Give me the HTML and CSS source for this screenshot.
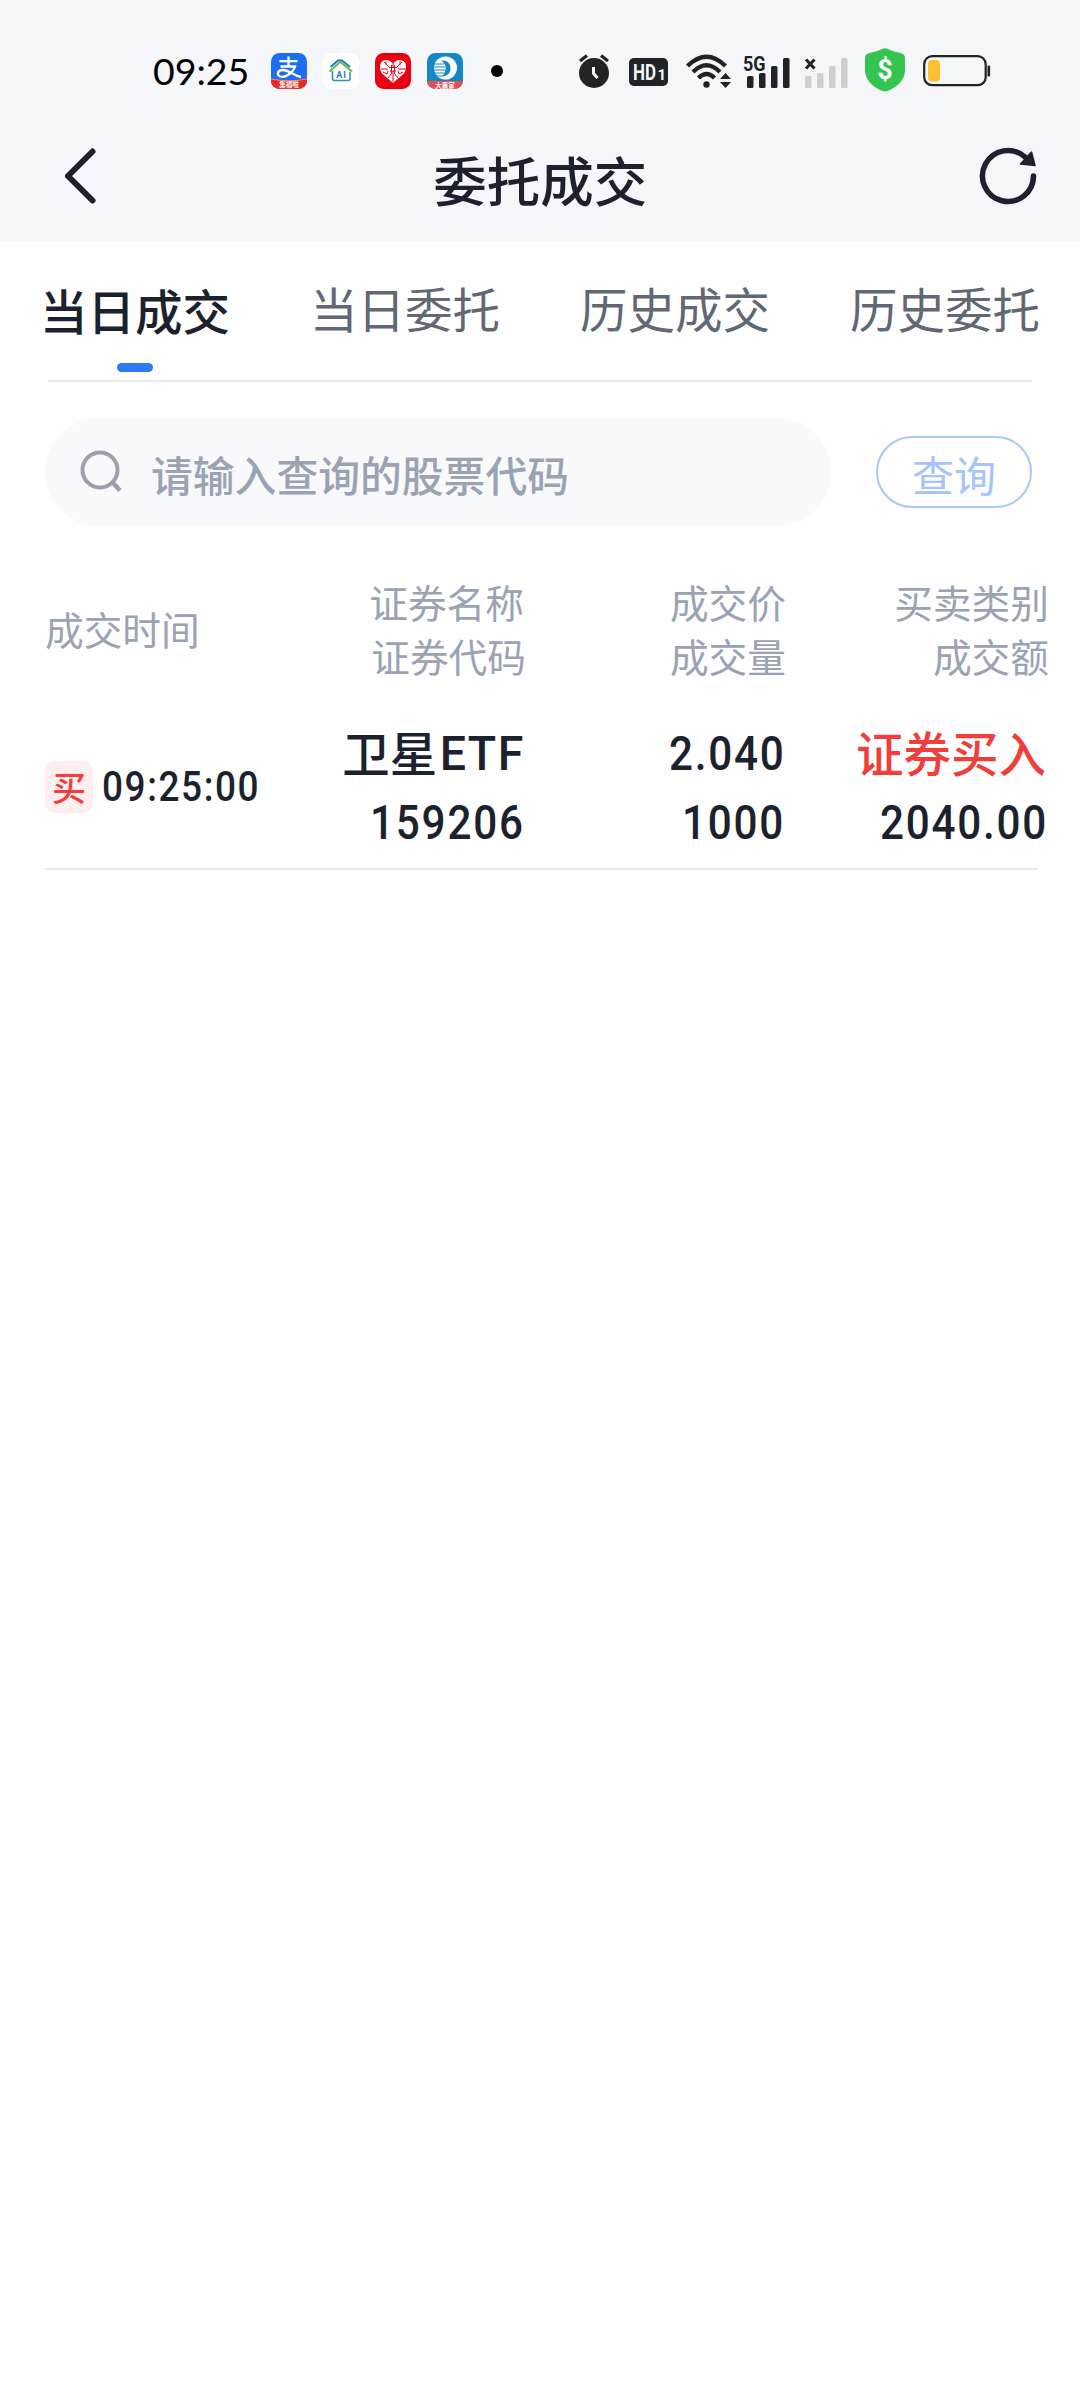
FILE: index.html
```html
<!DOCTYPE html>
<html lang="zh-CN">
<head>
<meta charset="utf-8">
<title>委托成交</title>
<link rel="stylesheet" href="styles.css">
</head>
<body>
<header class="top">
  <div class="status">
    <div class="status-left">
      <span class="clock">09:25</span>
      <svg class="app" viewBox="0 0 36 36">
        <defs><clipPath id="tile"><rect width="36" height="36" rx="8.5"/></clipPath></defs>
        <g clip-path="url(#tile)">
          <rect width="36" height="36" fill="#1b6ef3"/>
          <path d="M0 26Q18 29.5 36 26V36H0z" fill="#f0271c"/>
          <path d="M0 26Q18 29.5 36 26" fill="none" stroke="#ff8a5c" stroke-width="1"/>
        </g>
        <path d="M8.500 8.200H26.500M17.500 3.500V13.500M9.500 13.500H24C22 20 14 25 9.500 23.500C5 22 6.500 17 12 17C18 17 22 22.500 30 24" fill="none" stroke="#fff" stroke-width="2.300"/>
        <text x="18" y="34" class="tag">集福啦</text>
      </svg>
      <svg class="app" viewBox="0 0 36 36">
        <rect width="36" height="36" rx="8.5" fill="#fff"/>
        <path d="M6.500 18.500L16.500 9.500H18L29 18.500" fill="none" stroke="#72b84a" stroke-width="2.200"/>
        <path d="M7.500 14L15 7.500H19L27 14" fill="none" stroke="#1b7fc4" stroke-width="2"/>
        <path d="M9.500 18V25.500Q9.500 27.500 11.500 27.500H25Q27 27.500 27 25.500V19" fill="none" stroke="#2795b9" stroke-width="1.600"/>
        <text x="18.500" y="24.500" class="ai">AI</text>
      </svg>
      <svg class="app" viewBox="0 0 36 36">
        <rect width="36" height="36" rx="8.5" fill="#ea0011"/>
        <path d="M18 30L7 20.500Q3.500 14.500 6 9.500Q10 5.500 15 8L18 10.500L21 8Q26 5.500 30 9.500Q32.500 14.500 29 20.500Z" fill="#fff"/>
        <path d="M18 10V14M18 18V29M6 16H13M23 16H31M9 9L15 15M27 9L21 15M13 25L17 20M23 25L19 20M11 12V8M25 12V8M8 19L12 21L13 18M28 19L24 21L23 18M15 14.500H21M15 18H21M16.500 12V20M19.500 12V20" fill="none" stroke="#ea0011" stroke-width="1"/>
      </svg>
      <svg class="app" viewBox="0 0 36 36">
        <g clip-path="url(#tile)">
          <rect width="36" height="36" fill="#1488c6"/>
          <rect y="28" width="36" height="8" fill="#e2504f"/>
        </g>
        <circle cx="18.500" cy="15" r="11.500" fill="#fff"/>
        <path d="M14 7.500Q24 7 23.500 16Q23 23 15 23.500Q20 18 18 12Q17 9 14 7.500Z" fill="#1488c6"/>
        <path d="M5 11H17M5 14H18M5 17H18M6 20H17M9 23H16" stroke="#1488c6" stroke-width="1"/>
        <text x="18" y="34.500" class="tag">大赢家</text>
      </svg>
      <i class="dot"></i>
    </div>
    <div class="status-right">
      <svg width="32" height="36" viewBox="0 0 32 36">
        <circle cx="16" cy="20" r="15" fill="#212327"/>
        <path d="M2 8L9 2.500M23 2.500L30 8" stroke="#212327" stroke-width="3.200"/>
        <path d="M15.500 14V20.500L19.500 25" fill="none" stroke="#f4f6fa" stroke-width="3"/>
      </svg>
      <svg class="hd" width="39" height="28" viewBox="0 0 39 28">
        <rect width="39" height="28" rx="5" fill="#212327"/>
        <text x="4" y="21.800" textLength="23" lengthAdjust="spacingAndGlyphs" class="hd-text">HD</text>
        <text x="28.500" y="21.800" class="hd-one">1</text>
      </svg>
      <svg class="wifi" width="45" height="36" viewBox="0 0 45 36">
        <g fill="none" stroke="#212327" stroke-width="4.400">
          <path d="M1.500 13Q20.500 -5.500 39.500 13"/>
          <path d="M7 19Q20.500 5.500 34 19"/>
          <path d="M12.500 25Q20.500 17 28.500 25"/>
        </g>
        <circle cx="20.500" cy="31.500" r="3.200" fill="#212327"/>
        <path d="M34 26L39.500 20L45 26ZM34 29L39.500 35L45 29Z" fill="#212327"/>
      </svg>
      <svg class="sig" width="47" height="34" viewBox="0 0 47 34">
        <text x="-1" y="17" textLength="22.500" lengthAdjust="spacingAndGlyphs" class="net">5G</text>
        <g fill="#212327"><rect x="3" y="22" width="6.500" height="12" rx="1.500"/><rect x="15" y="19" width="6.500" height="15" rx="1.500"/><rect x="27" y="12" width="6.500" height="22" rx="1.500"/><rect x="39" y="4" width="6.500" height="30" rx="1.500"/></g>
      </svg>
      <svg class="sig2" width="44" height="34" viewBox="0 0 44 34">
        <path d="M2 5.500L10.500 14.500M10.500 5.500L2 14.500" stroke="#212327" stroke-width="3"/>
        <g fill="#cdced3"><rect x="1" y="22" width="6.500" height="12" rx="1.500"/><rect x="13" y="19" width="6.500" height="15" rx="1.500"/><rect x="25" y="12" width="6.500" height="22" rx="1.500"/><rect x="37" y="4" width="6.500" height="30" rx="1.500"/></g>
      </svg>
      <svg class="shield" width="40" height="44" viewBox="0 0 40 44">
        <path d="M17.500 .8Q20 -.2 22.500 .8Q28 4 35.500 5Q40 6 40 10V23Q39 36 23 42.800Q20 44 17 42.800Q1 36 0 23V10Q0 6 4.500 5Q12 4 17.500 .8Z" fill="#34c44f"/>
        <text x="20" y="31" class="cash">$</text>
      </svg>
      <svg class="batt" width="68" height="32" viewBox="0 0 68 32">
        <rect x="1.200" y="1.200" width="61.500" height="29" rx="8" fill="none" stroke="#212327" stroke-width="2.200"/>
        <rect x="5" y="5" width="12" height="21.500" rx="4" fill="#fdc02f"/>
        <rect x="64.500" y="10.500" width="2.600" height="11" rx="1" fill="#212327"/>
      </svg>
    </div>
  </div>
  <nav class="nav">
    <svg width="36" height="60" viewBox="0 0 36 60"><path d="M29.500 5.500L5 30L29.500 54.500" fill="none" stroke="#1c222d" stroke-width="6" stroke-linecap="round" stroke-linejoin="round"/></svg>
    <h1 class="title">委托成交</h1>
    <svg width="60" height="60" viewBox="0 0 60 60"><path d="M55.500 30A25.500 25.500 0 1 1 47 11" fill="none" stroke="#1c222d" stroke-width="5.500" stroke-linecap="round"/><path d="M53.500 6L57 19.500L42.500 18Z" fill="#1c222d" stroke="#1c222d" stroke-width="1.500" stroke-linejoin="round"/></svg>
  </nav>
</header>
<main>
  <div class="tabs">
    <a class="tab active">当日成交</a>
    <a class="tab">当日委托</a>
    <a class="tab">历史成交</a>
    <a class="tab">历史委托</a>
  </div>
  <div class="query">
    <div class="search">
      <svg width="44" height="44" viewBox="0 0 44 44"><circle cx="20" cy="20" r="17.500" fill="none" stroke="#9aa1ad" stroke-width="4"/><path d="M33 33L40 40.500" stroke="#9aa1ad" stroke-width="4.500"/></svg>
      <span class="hint">请输入查询的股票代码</span>
    </div>
    <button class="go">查询</button>
  </div>
  <section class="table">
    <div class="row head">
      <div>成交时间</div>
      <div class="cell"><span class="nudge">证券名称</span><span>证券代码</span></div>
      <div class="cell"><span>成交价</span><span>成交量</span></div>
      <div class="cell"><span>买卖类别</span><span>成交额</span></div>
    </div>
    <div class="row item">
      <div class="when"><b class="badge">买</b><span class="num small">09:25:00</span></div>
      <div class="cell"><span class="name"><span class="han">卫星</span><span class="num">ETF</span></span><span class="num">159206</span></div>
      <div class="cell"><span class="num">2.040</span><span class="num">1000</span></div>
      <div class="cell"><span class="side">证券买入</span><span class="num">2040.00</span></div>
    </div>
  </section>
</main>
</body>
</html>
```
FILE: styles.css
```css
* { box-sizing: border-box; }
body {
  margin: 0;
  min-height: 2400px;
  background: #fefefe;
  color: #1c222d;
  font-family: "Noto Sans CJK SC", sans-serif;
}
svg { display: block; flex: none; overflow: visible; }
.top { height: 242px; background: #f4f6fa; }
.status { height: 120px; padding: 22px 89px 0 153px; display: flex; justify-content: space-between; }
.status-left, .status-right { display: flex; align-items: center; height: 98px; }
.clock { width: 118px; font: 400 37.5px/96px Lato, sans-serif; color: #000; }
.app { width: 36px; height: 36px; margin-right: 16px; }
.dot { width: 12px; height: 12px; border-radius: 50%; background: #000; margin-left: 12px; }
.tag { font: 700 6.500px "Noto Sans CJK SC", sans-serif; fill: #fff; text-anchor: middle; }
.ai { font: 700 9px Roboto, sans-serif; fill: #1b7fc4; text-anchor: middle; letter-spacing: 1px; }
.hd { margin: 2px 0 0 19px; }
.hd-text { font: 700 22px Roboto, sans-serif; fill: #f4f6fa; }
.hd-one { font: 700 15px Roboto, sans-serif; fill: #f4f6fa; }
.wifi { margin-left: 18px; }
.sig { margin-left: 13px; }
.sig2 { margin-left: 13px; }
.net { font: 700 20px Roboto, sans-serif; fill: #212327; }
.shield { margin: -2px 0 0 17px; }
.cash { font: 700 27px Roboto, sans-serif; fill: #fff; text-anchor: middle; }
.batt { margin: -1px 0 0 18px; }
.nav { height: 112px; padding: 0 42px 0 62.500px; display: flex; align-items: center; justify-content: space-between; }
.title { flex: 1; margin: 6px 0 0 -19px; padding-left: 23px; text-align: center; font-size: 53.500px; line-height: 78px; font-weight: 500; }
.tabs { display: grid; grid-template-columns: repeat(4, 1fr); height: 140px; padding-top: 32px; background: linear-gradient(#e9eaec, #e9eaec) 48px 138px / 984px 2px no-repeat; }
.tab { text-align: center; font-size: 47.500px; line-height: 68px; color: #626873; }
.tab.active { color: #1c222d; font-weight: 500; line-height: 72px; }
.tab.active::after { content: ""; display: block; width: 36px; height: 9px; margin: 17px auto 0; border-radius: 4.500px; background: #2f79f5; }
.query { display: flex; align-items: center; justify-content: space-between; padding: 36px 48px 0 45px; }
.search { width: 786px; height: 108px; border-radius: 54px; background: #f8f9fb; display: flex; align-items: center; padding-left: 35px; }
.hint { margin: 4px 0 0 27px; font-size: 41.800px; line-height: 60px; font-weight: 500; color: #9aa3b3; }
.go { width: 156px; height: 72px; padding: 3px 0 0; border: 2px solid #adc6f3; border-radius: 36px; background: none; font: 400 42px/60px "Noto Sans CJK SC", sans-serif; color: #a6c4fa; }
.row { display: grid; grid-template-columns: 230px 251px 260px 263px; align-items: center; margin-left: 45px; width: 1004px; }
.head { margin-top: 48px; height: 108px; font-size: 38.700px; line-height: 54px; color: #9aa3b3; }
.cell { display: flex; flex-direction: column; align-items: flex-end; }
.nudge { margin-right: 2px; }
.item { height: 188px; padding-top: 24px; background: linear-gradient(#e9eaec, #e9eaec) 0 186px / 993px 2px no-repeat; }
.item .cell { line-height: 69px; padding-right: 3px; font-size: 47.500px; font-weight: 500; height: 138px; }
.num { display: inline-block; height: 69px; font: 500 48px/69px Roboto, sans-serif; letter-spacing: 2px; margin-right: -2px; transform: scaleX(.88); transform-origin: right; }
.name { display: flex; }
.name .num { margin-left: 0; letter-spacing: 1.500px; transform: scaleX(.97); }
.han, .side { margin-top: -2px; height: 71px; }
.side { color: #ee3f3a; }
.when { display: flex; align-items: center; gap: 8px; margin-top: -3px; }
.badge { flex: none; width: 48px; height: 52px; border-radius: 10px; background: #ffeeef; color: #ee3f3a; font-size: 34px; line-height: 51px; font-weight: 500; text-align: center; }
.small { font-size: 42px; letter-spacing: 1.800px; transform-origin: left; margin-left: 1px; }
```
